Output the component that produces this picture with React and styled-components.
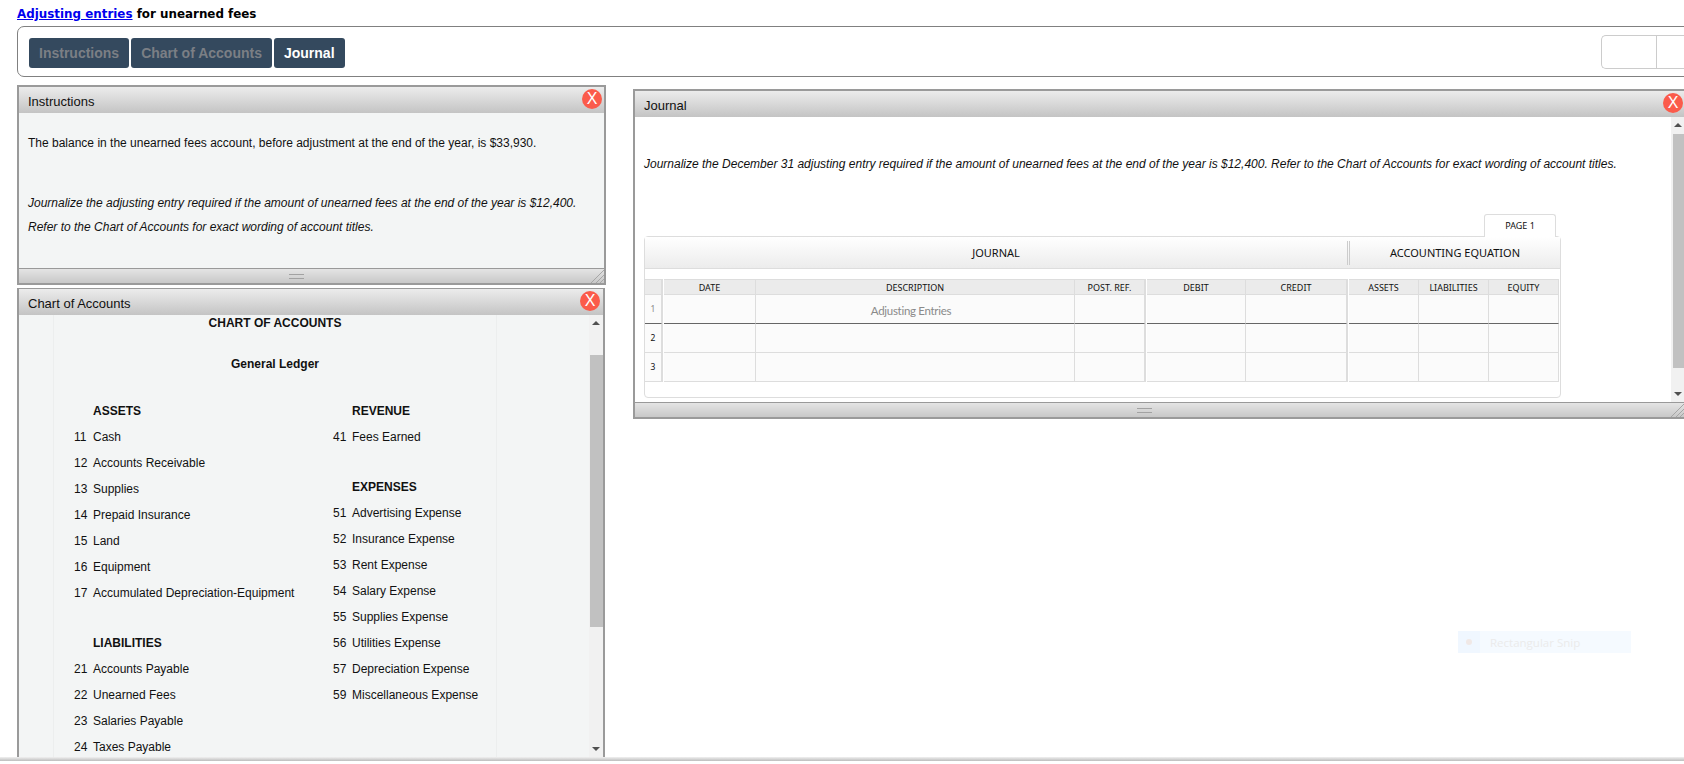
import React from 'react'
import styled, { createGlobalStyle, css } from 'styled-components'

const GlobalStyle = createGlobalStyle`
  html, body { margin: 0; padding: 0; background: #fff; }
  body { font-family: "Liberation Sans", Arial, sans-serif; color: #111; }
`

const Page = styled.div`
  position: relative;
  width: 1684px;
  height: 764px;
  overflow: hidden;
`

const Title = styled.h1`
  margin: 0;
  padding-left: 17px;
  height: 26px;
  font: bold 11.9px/28px "DejaVu Sans", Verdana, sans-serif;
  color: #000;
  a { color: #0000ee; }
`

const Toolbar = styled.div`
  display: flex;
  align-items: center;
  justify-content: space-between;
  box-sizing: border-box;
  height: 51px;
  margin: 0 -12px 8px 17px;
  padding: 0 0 0 11px;
  border: 1px solid #808080;
  border-radius: 7px;
`

const Tabs = styled.div`
  display: flex;
  gap: 2px;
  margin-top: 2px;
`

const Tab = styled.button`
  height: 30px;
  padding: 0 10px;
  border: 0;
  border-radius: 3px;
  background: #34495e;
  color: ${p => (p.$active ? '#fff' : '#7b7f85')};
  font: bold 14px "Liberation Sans", Arial, sans-serif;
`

const ToggleGroup = styled.div`
  display: flex;
  box-sizing: border-box;
  width: 94px;
  height: 34px;
  border: 1px solid #ccc;
  border-right: 0;
  border-radius: 5px 0 0 5px;
  span { width: 54px; border-right: 1px solid #ccc; }
`

const Desktop = styled.div`
  display: grid;
  grid-template-columns: 589px 1fr;
  column-gap: 27px;
  margin-left: 17px;
`

const LeftColumn = styled.div`
  display: flex;
  flex-direction: column;
  gap: 3px;
`

const Panel = styled.section`
  position: relative;
  box-sizing: border-box;
  display: flex;
  flex-direction: column;
  border: 2px solid #9a9a9a;
  ${p => p.$tone === 'white' ? 'background: #fff;' : 'background: #f3f5f5;'}
`

const InstructionsPanel = styled(Panel)`
  height: 200px;
`

const ChartPanel = styled(Panel)`
  width: 588px;
  height: 471px;
  border-top-width: 1px;
  overflow: hidden;
`

const JournalPanel = styled(Panel)`
  height: 330px;
  margin-top: 4px;
  border-right: 0;
`

const PanelHeader = styled.header`
  flex: none;
  height: 26px;
  padding-left: 9px;
  background: linear-gradient(#ececec, #c4c4c4);
  font-size: 13px;
  line-height: 29px;
  color: #111;
`

const CloseButton = styled.span`
  position: absolute;
  top: 2px;
  right: ${p => p.$right}px;
  z-index: 2;
  box-sizing: border-box;
  width: 20px;
  height: 20px;
  border-radius: 50%;
  background: #fb5b4b;
  color: #fff;
  text-align: center;
  font-size: 16px;
  line-height: 20px;
`

const Resizer = styled.div`
  position: relative;
  flex: none;
  display: flex;
  align-items: center;
  justify-content: center;
  box-sizing: border-box;
  height: 15px;
  padding-right: 30px;
  margin-top: auto;
  border-top: 1px solid #999;
  background: linear-gradient(#e4e4e4, #c8c8c8);
  i {
    display: block;
    width: 15px;
    height: 3px;
    border-top: 1px solid #a2a2a2;
    border-bottom: 1px solid #a2a2a2;
  }
  svg { position: absolute; right: 0; bottom: 0; }
`

const InstructionsBody = styled.div`
  padding: 18px 9px 0;
  font-size: 12px;
  line-height: 24px;
`

const Para = styled.p`
  margin: 0 0 ${p => p.$gap || 0}px;
  font-style: ${p => (p.$em ? 'italic' : 'normal')};
`

const ChartBody = styled.div`
  position: relative;
  flex: 1;
  min-height: 0;
  overflow: hidden;
`

const ChartSheet = styled.div`
  box-sizing: border-box;
  width: 444px;
  margin-left: 34px;
  height: 100%;
  border-left: 1px solid #eceeee;
  border-right: 1px solid #eceeee;
  font-size: 12px;
`

const SheetTitle = styled.div`
  text-align: center;
  font-weight: bold;
  line-height: 16px;
  margin-bottom: ${p => p.$after}px;
`

const AccountColumns = styled.div`
  display: grid;
  grid-template-columns: 259px 1fr;
  padding-left: 20px;
`

const SectionHead = styled.div`
  height: 26px;
  margin-top: ${p => (p.$first ? 0 : 24)}px;
  padding-left: 19px;
  line-height: 26px;
  font-weight: bold;
`

const Account = styled.div`
  display: flex;
  height: 26px;
  line-height: 26px;
  span { width: 19px; flex: none; }
`

const Scrollbar = styled.div`
  position: absolute;
  top: 0;
  right: 0;
  bottom: 0;
  width: ${p => p.$width}px;
  background: #f1f1f1;
  &::before, &::after {
    content: "";
    position: absolute;
    left: 50%;
    margin-left: -4px;
    border-left: 4px solid transparent;
    border-right: 4px solid transparent;
  }
  &::before { top: 6px; border-bottom: 4px solid #505050; }
  &::after { bottom: 6px; border-top: 4px solid #505050; }
`

const Thumb = styled.div`
  margin-left: ${p => p.$inset || 0}px;
  height: ${p => p.$height}px;
  transform: translateY(${p => p.$top}px);
  background: #c1c1c1;
`

const JournalBody = styled.div`
  position: relative;
  flex: 1;
  min-height: 0;
  padding: 39px 0 0 9px;
`

const Lead = styled.p`
  margin: 0;
  font-size: 12px;
  line-height: 16px;
  font-style: italic;
`

const SheetArea = styled.div`
  width: 917px;
  margin-top: 42px;
  font-family: "Noto Sans", Tahoma, sans-serif;
  color: #111;
`

const PageTab = styled.div`
  box-sizing: border-box;
  width: 72px;
  height: 23px;
  margin: 0 5px -1px auto;
  border: 1px solid #ddd;
  border-bottom: 0;
  border-radius: 3px 3px 0 0;
  background: #fff;
  position: relative;
  text-align: center;
  font-size: 9px;
  line-height: 22px;
`

const Sheet = styled.div`
  box-sizing: border-box;
  height: 162px;
  border: 1px solid #ddd;
  border-radius: 4px;
`

const SheetHeader = styled.div`
  display: grid;
  grid-template-columns: 702px 1fr;
  align-items: center;
  height: 31px;
  border-bottom: 1px solid #ddd;
  background: linear-gradient(#fff, #ececec);
  font-size: 11px;
  text-align: center;
`

const SheetHeading = styled.div`
  line-height: 24px;
  ${p => p.$split && css`
    border-left: 3px double #ccc;
  `}
`

const Grid = styled.div`
  display: grid;
  grid-template-columns: 17px 2px 92px 319px 70px 2px 99px 101px 2px 70px 70px 70px;
  grid-template-rows: 16px repeat(3, 29px);
  margin: 10px 1px 0 0;
`

const Cell = styled.div`
  box-sizing: border-box;
  background: #fbfbfb;
  border-right: 1px solid #ddd;
  border-bottom: 1px solid #ddd;
  text-align: center;
  font-size: 8.5px;
  line-height: 28px;
  color: ${p => (p.$muted ? '#8a8a8a' : '#111')};
  ${p => p.$ruled && 'border-bottom-color: #666;'}
  ${p => p.$entry && css`
    padding-right: 8px;
    font: 11.5px/31px Lato, sans-serif;
    letter-spacing: -0.3px;
  `}
`

const HeadCell = styled(Cell)`
  background: #ebebeb;
  border-top: 1px solid #ddd;
  font-size: 9px;
  line-height: 15px;
`

const GapCell = styled.div`
  background: #fff;
  border-left: 1px solid #ddd;
`

const SnipHint = styled.div`
  position: absolute;
  left: 1458px;
  top: 631px;
  display: flex;
  align-items: center;
  width: 173px;
  height: 22px;
  background: #f5faff;
  font: 11.5px "Open Sans", sans-serif;
  color: #ebebeb;
  i {
    display: flex;
    align-items: center;
    justify-content: center;
    width: 22px;
    height: 100%;
    margin-right: 10px;
    background: #f0f7ff;
  }
  i::before {
    content: "";
    width: 6px;
    height: 6px;
    border-radius: 50%;
    background: #f0e8e6;
  }
`

const BottomEdge = styled.div`
  position: absolute;
  left: 0;
  right: 0;
  bottom: 0;
  height: 7px;
  background: linear-gradient(#f0f0f0, #bdbdbd 57%, #fff 57%);
`

const Hatch = () => (
  <svg width="14" height="14" viewBox="0 0 14 14">
    <path d="M1 14 14 1M6 14l8-8M10 14l4-4" stroke="#a6a6a6" fill="none" />
  </svg>
)

const assets = [
  ['11', 'Cash'],
  ['12', 'Accounts Receivable'],
  ['13', 'Supplies'],
  ['14', 'Prepaid Insurance'],
  ['15', 'Land'],
  ['16', 'Equipment'],
  ['17', 'Accumulated Depreciation-Equipment'],
]
const liabilities = [
  ['21', 'Accounts Payable'],
  ['22', 'Unearned Fees'],
  ['23', 'Salaries Payable'],
  ['24', 'Taxes Payable'],
]
const expenses = [
  ['51', 'Advertising Expense'],
  ['52', 'Insurance Expense'],
  ['53', 'Rent Expense'],
  ['54', 'Salary Expense'],
  ['55', 'Supplies Expense'],
  ['56', 'Utilities Expense'],
  ['57', 'Depreciation Expense'],
  ['59', 'Miscellaneous Expense'],
]

const AccountList = ({ items }) => items.map(([no, name]) => (
  <Account key={no}><span>{no}</span>{name}</Account>
))

const JournalRow = ({ no }) => {
  const first = no === 1
  return (
    <>
      <Cell $ruled={first} $muted={first}>{no}</Cell>
      <GapCell />
      <Cell $ruled={first} />
      <Cell $ruled={first} $entry $muted>{first && 'Adjusting Entries'}</Cell>
      <Cell $ruled={first} />
      <GapCell />
      <Cell $ruled={first} />
      <Cell $ruled={first} />
      <GapCell />
      <Cell $ruled={first} />
      <Cell $ruled={first} />
      <Cell $ruled={first} />
    </>
  )
}

export default function App() {
  return (
    <Page>
      <GlobalStyle />
      <Title><a href="#">Adjusting entries</a> for unearned fees</Title>
      <Toolbar>
        <Tabs>
          <Tab>Instructions</Tab>
          <Tab>Chart of Accounts</Tab>
          <Tab $active>Journal</Tab>
        </Tabs>
        <ToggleGroup><span /></ToggleGroup>
      </Toolbar>
      <Desktop>
        <LeftColumn>
          <InstructionsPanel>
            <PanelHeader>Instructions</PanelHeader>
            <CloseButton $right={2}>X</CloseButton>
            <InstructionsBody>
              <Para $gap={36}>The balance in the unearned fees account, before adjustment at the end of the year, is $33,930.</Para>
              <Para $em>Journalize the adjusting entry required if the amount of unearned fees at the end of the year is $12,400.</Para>
              <Para $em>Refer to the Chart of Accounts for exact wording of account titles.</Para>
            </InstructionsBody>
            <Resizer><i /><Hatch /></Resizer>
          </InstructionsPanel>
          <ChartPanel>
            <PanelHeader>Chart of Accounts</PanelHeader>
            <CloseButton $right={3}>X</CloseButton>
            <ChartBody>
              <ChartSheet>
                <SheetTitle $after={25}>CHART OF ACCOUNTS</SheetTitle>
                <SheetTitle $after={26}>General Ledger</SheetTitle>
                <AccountColumns>
                  <div>
                    <SectionHead $first>ASSETS</SectionHead>
                    <AccountList items={assets} />
                    <SectionHead>LIABILITIES</SectionHead>
                    <AccountList items={liabilities} />
                  </div>
                  <div>
                    <SectionHead $first>REVENUE</SectionHead>
                    <AccountList items={[['41', 'Fees Earned']]} />
                    <SectionHead>EXPENSES</SectionHead>
                    <AccountList items={expenses} />
                  </div>
                </AccountColumns>
              </ChartSheet>
              <Scrollbar $width={14}>
                <Thumb $inset={1} $height={272} $top={40} />
              </Scrollbar>
            </ChartBody>
          </ChartPanel>
        </LeftColumn>
        <JournalPanel $tone="white">
          <PanelHeader>Journal</PanelHeader>
          <CloseButton $right={1}>X</CloseButton>
          <JournalBody>
            <Lead>Journalize the December 31 adjusting entry required if the amount of unearned fees at the end of the year is $12,400. Refer to the Chart of Accounts for exact wording of account titles.</Lead>
            <SheetArea>
              <PageTab>PAGE 1</PageTab>
              <Sheet>
                <SheetHeader>
                  <SheetHeading>JOURNAL</SheetHeading>
                  <SheetHeading $split>ACCOUNTING EQUATION</SheetHeading>
                </SheetHeader>
                <Grid>
                  <HeadCell />
                  <GapCell />
                  <HeadCell>DATE</HeadCell>
                  <HeadCell>DESCRIPTION</HeadCell>
                  <HeadCell>POST. REF.</HeadCell>
                  <GapCell />
                  <HeadCell>DEBIT</HeadCell>
                  <HeadCell>CREDIT</HeadCell>
                  <GapCell />
                  <HeadCell>ASSETS</HeadCell>
                  <HeadCell>LIABILITIES</HeadCell>
                  <HeadCell>EQUITY</HeadCell>
                  {[1, 2, 3].map(no => <JournalRow key={no} no={no} />)}
                </Grid>
              </Sheet>
            </SheetArea>
            <Scrollbar $width={13}>
              <Thumb $inset={2} $height={234} $top={17} />
            </Scrollbar>
          </JournalBody>
          <Resizer><i /><Hatch /></Resizer>
        </JournalPanel>
      </Desktop>
      <SnipHint><i />Rectangular Snip</SnipHint>
      <BottomEdge />
    </Page>
  )
}
